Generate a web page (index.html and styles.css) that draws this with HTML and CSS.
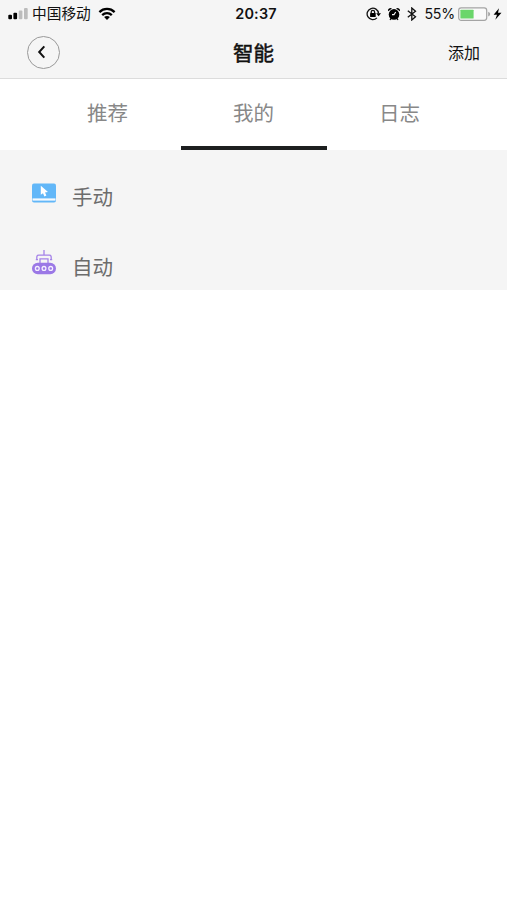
FILE: index.html
```html
<!DOCTYPE html>
<html lang="zh-CN">
<head>
<meta charset="utf-8">
<title>智能</title>
<link rel="stylesheet" href="styles.css">
</head>
<body>
<header class="top">
  <div class="status">
    <div class="status-left">
      <svg class="signal" width="21" height="13" viewBox="0 0 21 13">
        <rect x="0.3" y="7.7" width="3.7" height="4.6" rx="1"/>
        <rect x="5.4" y="5.8" width="3.7" height="6.5" rx="1"/>
        <rect class="weak" x="10.7" y="3.5" width="3.7" height="8.8" rx="1"/>
        <rect class="weak" x="16" y="1" width="3.7" height="11.3" rx="1"/>
      </svg>
      <span class="carrier">中国移动</span>
      <svg class="wifi" width="18" height="14" viewBox="0 0 18 14">
        <path class="arc" d="M1.4 5.1C5.7 .9 12.3.9 16.6 5.1M4.2 8.1C6.9 5.5 11.1 5.5 13.8 8.1"/>
        <path d="M6.1 10.1C7.8 8.6 10.2 8.6 11.9 10.1L9 13Z"/>
      </svg>
    </div>
    <time class="clock">20:37</time>
    <div class="status-right">
      <svg class="lock" width="15" height="14" viewBox="0 0 15 14">
        <path class="line" d="M10.9 10.9A5.7 5.7 0 1 1 12.5 6.4"/>
        <path d="M10.2 6.2H15L12.6 9.2Z"/>
        <rect x="4.1" y="6" width="5.6" height="4.1" rx=".6"/>
        <path class="line" d="M5.2 6.2V5a1.7 1.7 0 0 1 3.4 0V6.2"/>
      </svg>
      <svg class="alarm" width="12" height="14" viewBox="0 0 12 14">
        <circle cx="6" cy="7.4" r="5.3"/>
        <path d="M.2 4.3A2.4 2.4 0 0 1 4 1.6ZM11.8 4.3A2.4 2.4 0 0 0 8 1.6ZM1.5 12.8 3 10.5 4.2 11.5 2.3 13.2ZM10.5 12.8 9 10.5 7.8 11.5 9.7 13.2Z"/>
        <path class="hand" d="M7.7 5 6 7.6H4"/>
      </svg>
      <svg class="bluetooth" width="10" height="14" viewBox="0 0 10 14">
        <path class="line" d="M.8 3.8 8.5 9.8 4.8 13V1L8.5 4.2.8 10.2"/>
      </svg>
      <span class="percent">55%</span>
      <svg class="battery" width="33" height="14" viewBox="0 0 33 14">
        <rect class="case" x=".7" y=".9" width="28" height="12.4" rx="2.5"/>
        <rect class="charge" x="2.4" y="2.7" width="13.2" height="8.8" rx=".6"/>
        <path class="cap" d="M30.2 4.8Q32.2 5.4 32.2 7.1T30.2 9.4Z"/>
      </svg>
      <svg class="bolt" width="9" height="12" viewBox="0 0 9 12">
        <path d="M6 .3.6 6.8H4L2.3 11.7 8.5 4.8H5Z"/>
      </svg>
    </div>
  </div>
  <nav class="nav">
    <a class="back" aria-label="返回">
      <svg width="10" height="14" viewBox="0 0 10 14"><path d="M7.3 1.4 2.2 7l5.1 5.6"/></svg>
    </a>
    <h1 class="title">智能</h1>
    <a class="add">添加</a>
  </nav>
</header>
<div class="tabs">
  <a class="tab">推荐</a>
  <a class="tab active">我的</a>
  <a class="tab">日志</a>
</div>
<main class="list">
  <section class="row">
    <svg width="26" height="26" viewBox="0 0 26 26">
      <rect x="1" y="3.5" width="24" height="19" rx="2" fill="#62b7f8"/>
      <rect x="1.5" y="18.4" width="23" height="2.2" fill="#f5fbff"/>
      <path d="M9.8 5.8V14.8L12 13.2 13.4 16.4 15.4 15.5 14 12.4 17 12Z" fill="#fff"/>
    </svg>
    <span>手动</span>
  </section>
  <section class="row">
    <svg width="26" height="26" viewBox="0 0 26 26">
      <path d="M13 0V5.2M5.8 9.8V7.2Q5.8 5.2 7.8 5.2H18.2Q20.2 5.2 20.2 7.2V9.8M4.8 9.6H7M19 9.6H21.2M9 14V8.8H17V14" fill="none" stroke="#a583e8" stroke-width="1.3"/>
      <rect x="1" y="12.8" width="24" height="11.4" rx="5.7" fill="#9b78e6"/>
      <g fill="none" stroke="#f5f0ff" stroke-width="1.3"><circle cx="6.3" cy="18.4" r="1.9"/><circle cx="13" cy="18.4" r="1.9"/><circle cx="19.7" cy="18.4" r="1.9"/></g>
    </svg>
    <span>自动</span>
  </section>
</main>
</body>
</html>
```
FILE: styles.css
```css
* { box-sizing: border-box; }

body {
  margin: 0;
  min-height: 900px;
  background: #fff;
  color: #111;
  font-family: Inter, "Noto Sans CJK SC", sans-serif;
}

svg { display: block; flex: none; }

.top {
  height: 79px;
  background: #f5f5f5;
  border-bottom: 1px solid #dcdcdc;
}

.status {
  display: grid;
  grid-template-columns: 1fr auto 1fr;
  align-items: center;
  height: 27px;
  padding: 0 5px 0 8px;
}

.status-left, .status-right { display: flex; align-items: center; }
.status-right { justify-content: flex-end; }

.weak { fill: #bcbcbc; }
.carrier { margin: 0 7px 0 3px; padding-top: 1px; font-size: 14.7px; line-height: 20px; }
.arc { fill: none; stroke: #000; stroke-width: 2.3; }
.clock { padding-left: 2px; font-size: 14.4px; font-weight: 600; letter-spacing: .2px; }
.line { fill: none; stroke: #111; stroke-width: 1.3; }
.alarm { margin-left: 7px; }
.hand { fill: none; stroke: #f5f5f5; stroke-width: 1.1; }
.bluetooth { margin-left: 7px; }
.percent { margin: 0 3px 0 7px; font-size: 14.2px; letter-spacing: -.2px; }
.case { fill: #fafafa; stroke: #a4a4a4; stroke-width: 1.2; }
.charge { fill: #6bd66b; }
.cap { fill: #a4a4a4; }
.bolt { margin-left: 2px; }

.nav {
  display: grid;
  grid-template-columns: 1fr auto 1fr;
  align-items: center;
  height: 51px;
  padding: 0 27px;
}

.back {
  display: flex;
  align-items: center;
  justify-content: center;
  width: 33px;
  height: 33px;
  padding: 0 4px 1px 0;
  border: 1px solid #999;
  border-radius: 50%;
}
.back path { fill: none; stroke: #111; stroke-width: 2; }

.title {
  margin: 0;
  padding-top: 2px;
  font-size: 20.5px;
  font-weight: 400;
  line-height: 30px;
  -webkit-text-stroke: .5px #111;
}
.add { justify-self: end; font-size: 16px; line-height: 24px; }

.tabs {
  display: flex;
  height: 71px;
  padding: 0 34.5px;
}

.tab {
  flex: 1;
  height: 71px;
  padding-top: 20px;
  border-bottom: 4px solid transparent;
  color: #888;
  font-size: 20.5px;
  line-height: 30px;
  text-align: center;
}
.active { border-color: #1d1f20; }

.list {
  height: 140px;
  background: #f5f5f5;
}

.row {
  display: flex;
  align-items: flex-start;
  gap: 15px;
  height: 70px;
  padding: 30px 0 0 31px;
  color: #6c6c6c;
  font-size: 20.5px;
  line-height: 36px;
}
```
